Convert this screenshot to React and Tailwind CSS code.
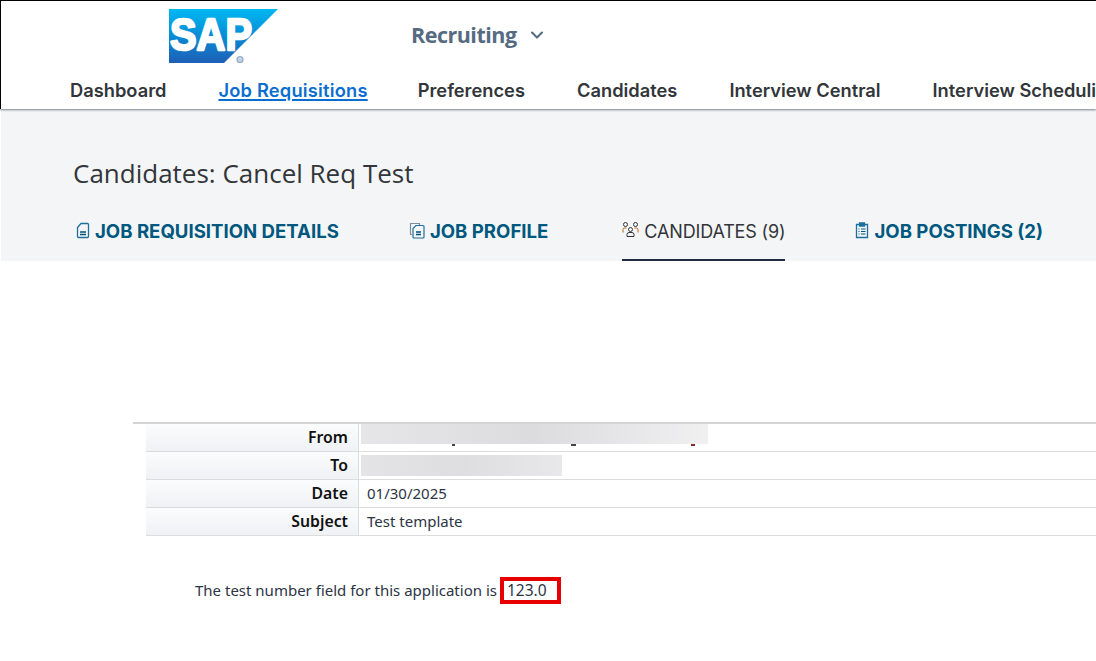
import React from 'react';
import { ChevronDown } from 'lucide-react';

const navItems = ['Dashboard', 'Job Requisitions', 'Preferences', 'Candidates', 'Interview Central', 'Interview Scheduling'];

const DocIcon = () => (
    <svg width="14" height="17" viewBox="0 0 14 17" fill="none" strokeWidth="1.3" className="-mt-[3px]">
        <path d="M5 1.5h6.5a1 1 0 0 1 1 1v12a1 1 0 0 1-1 1h-9a1 1 0 0 1-1-1V5.5z" stroke="#1d6f9c" />
        <path d="M4 10h6M4 12.5h6" stroke="#00527c" strokeWidth="1.6" />
    </svg>
);

const CopyIcon = () => (
    <svg width="16" height="17" viewBox="0 0 16 17" fill="none" strokeWidth="1.2" className="-mt-[3px]">
        <path d="M3 12.5H1.500V1.500h9V3" stroke="#7d8f9c" />
        <path d="M7 3.500h7a1 1 0 0 1 1 1v10.500a1 1 0 0 1-1 1H5a1 1 0 0 1-1-1V6.500z" stroke="#1d6f9c" />
        <path d="M7 10h5M7 12.500h5" stroke="#00527c" strokeWidth="1.500" />
    </svg>
);

const PeopleIcon = () => (
    <svg width="17" height="17" viewBox="0 0 17 17" fill="none" stroke="#32363a" strokeWidth="1" className="-mt-[3px]">
        <circle cx="3.500" cy="3.500" r="2" />
        <circle cx="13.500" cy="3.500" r="2" />
        <circle cx="8.500" cy="8.500" r="2" />
        <path d="M1 11.500V8.500q0-1.500 1.500-1.500h2M16 11.500V8.500q0-1.500-1.500-1.500h-2" stroke="#b5651d" />
        <path d="M5 15.500v-2q0-2 2-2h3q2 0 2 2v2z" />
    </svg>
);

const ClipboardIcon = () => (
    <svg width="14" height="17" viewBox="0 0 14 17" fill="none" stroke="#1d6f9c" strokeWidth="1.300" className="-mt-[3px]">
        <path d="M4 2.500H1.500v13h11v-13H10" />
        <path d="M4.500 1h5v3h-5z" fill="#1d6f9c" />
        <path d="M3.500 7h1M6 7h4.500M3.500 9.500h1M6 9.500h4.500M3.500 12h1M6 12h4.500" stroke="#00527c" strokeWidth="1.200" />
    </svg>
);

const SapLogo = () => (
    <svg width="109" height="54" viewBox="0 0 109 54" className="block">
        <defs>
            <linearGradient id="sapGrad" x1="0" y1="0" x2="0" y2="1">
                <stop offset="0" stopColor="#00b8f1" />
                <stop offset="0.5" stopColor="#0a8bd6" />
                <stop offset="1" stopColor="#1e5fb5" />
            </linearGradient>
        </defs>
        <polygon points="0,0 109,0 55,54 0,54" fill="url(#sapGrad)" />
        <text x="1" y="41" fill="#ffffff" fontSize="45" fontWeight="700" fontFamily="'Liberation Sans', sans-serif" textLength="82" lengthAdjust="spacingAndGlyphs" stroke="#ffffff" strokeWidth="2.400" strokeLinejoin="round">SAP</text>
        <circle cx="71" cy="50.500" r="3" fill="#c5d3e6" stroke="#8fa9c9" strokeWidth="1.200" />
    </svg>
);

const Tab = ({ icon, label, active, className }) => (
    <div className={`flex h-[52px] items-center gap-[5px] pb-[6px] font-['Inter',sans-serif] ${active ? 'border-b-2 border-[#1f2c3d] text-[18px] font-normal tracking-[-0.15px] text-[#32363a]' : 'text-[18.600px] font-bold text-[#00587f]'} ${className}`}>
        {icon}
        <span>{label}</span>
    </div>
);

const Row = ({ label, children }) => (
    <div className="flex h-[28px] border-b border-[#dcdcdc]">
        <div className="flex w-[213px] items-center justify-end border-r border-[#dcdcdc] bg-gradient-to-b from-[#fbfcfd] to-[#eff2f5] pr-[10px] text-[15.800px] font-semibold text-[#111]">
            {label}
        </div>
        <div className="flex min-w-0 flex-1 items-center pl-[2px] text-[15px] text-[#2c3545]">{children}</div>
    </div>
);

export default function App() {
    return (
        <div className="h-[661px] w-[1096px] overflow-hidden bg-white font-['Noto_Sans',sans-serif]">
            {/* Header */}
            <div className="relative z-10 h-[109px] border-t border-l border-black bg-white shadow-[0_1px_2px_rgba(80,90,100,0.75)]">
                <div className="flex h-[62px] pt-[8px]">
                    <div className="ml-[168px]"><SapLogo /></div>
                    <div className="ml-[133px] flex h-[52px] items-center gap-[10px] font-['Open_Sans',sans-serif] text-[21.500px] font-bold tracking-[-0.5px] text-[#556b82]">
                        Recruiting
                        <ChevronDown size={20} strokeWidth={2.500} />
                    </div>
                </div>
                <div className="ml-[69px] flex h-[56px] items-center gap-[52px] overflow-hidden whitespace-nowrap font-['Inter',sans-serif] text-[18.300px] font-semibold text-[#32363a]">
                    {navItems.map((item, i) => (
                        <span key={item} className={i === 1 ? '-mr-[2px] tracking-[0.2px] text-[#0a6ed1] underline decoration-2 underline-offset-2' : ''}>{item}</span>
                    ))}
                </div>
            </div>

            {/* Title and tabs */}
            <div className="ml-[1px] h-[152px] bg-[#f4f5f7] pl-[72px]">
                <h1 className="pt-[47px] font-['Open_Sans',sans-serif] text-[26px] leading-[35px] text-[#32363a]">Candidates: Cancel Req Test</h1>
                <div className="mt-[18px] flex">
                    <Tab icon={<DocIcon />} label="JOB REQUISITION DETAILS" className="ml-[3px]" />
                    <Tab icon={<CopyIcon />} label="JOB PROFILE" className="ml-[70px]" />
                    <Tab icon={<PeopleIcon />} label="CANDIDATES (9)" active className="ml-[74px]" />
                    <Tab icon={<ClipboardIcon />} label="JOB POSTINGS (2)" className="ml-[70px]" />
                </div>
            </div>

            {/* Message */}
            <div className="ml-[133px] mt-[161px] border-t-2 border-[#d4d4d4]">
                <div className="ml-[13px]">
                    <Row label="From">
                        <div className="relative h-[27px] w-[347px]">
                            <div className="h-[20px] w-full bg-gradient-to-r from-[#e6e6e8] via-[#dcdcdf] to-[#f0f0f1]" />
                            <div className="absolute bottom-[5px] left-[91px] h-[2px] w-[3px] bg-[#444]" />
                            <div className="absolute bottom-[5px] left-[210px] h-[2px] w-[5px] bg-[#444]" />
                            <div className="absolute bottom-[5px] left-[330px] h-[2px] w-[4px] bg-[#8b2a2a]" />
                        </div>
                    </Row>
                    <Row label="To">
                        <div className="h-[21px] w-[201px] bg-gradient-to-r from-[#e4e4e6] via-[#dedee0] to-[#e8e8ea]" />
                    </Row>
                    <Row label="Date"><span className="pl-[6px]">01/30/2025</span></Row>
                    <Row label="Subject"><span className="pl-[6px]">Test template</span></Row>
                </div>
            </div>
            <div className="ml-[195px] mt-[41px] flex items-center text-[15px] text-[#2c3545]">
                <span>The test number field for this application is</span>
                <span className="ml-[3px] flex h-[27px] w-[61px] items-center border-[4px] border-[#e60000] pl-[3px] text-[15.500px]">123.0</span>
            </div>
        </div>
    );
}
